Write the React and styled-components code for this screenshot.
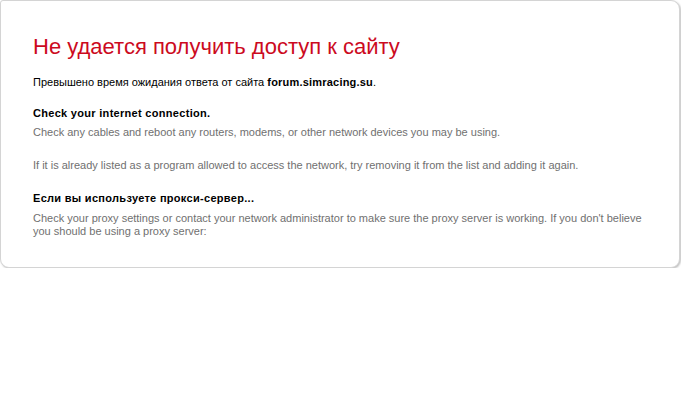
import React from 'react';
import styled, {createGlobalStyle} from 'styled-components';

const GlobalStyle = createGlobalStyle`
  html, body {
    margin: 0;
    padding: 0;
    background: #fff;
  }
  body {
    font-family: Tahoma, "Liberation Sans", "DejaVu Sans", sans-serif;
    font-size: 11px;
    color: #000;
  }
`;

const Card = styled.div`
  box-sizing: border-box;
  width: 680px;
  height: 268px;
  margin: 0;
  padding: 33px 32px 0 32px;
  background: #fff;
  border: 1px solid #d4d4d4;
  border-radius: 3px 9px 9px 9px;
  box-shadow: 1px 1px 2px rgba(0, 0, 0, 0.25);
`;

const Title = styled.h1`
  margin: 0 0 15px;
  font-size: 22px;
  font-weight: normal;
  line-height: 26px;
  color: #cc0a1e;
`;

const Lead = styled.p`
  margin: 0 0 17px;
  line-height: 14px;

  b {
    letter-spacing: 0.2px;
  }
`;

const Heading = styled.h2`
  margin: 0 0 ${props => props.gap || 6}px;
  font-size: 11px;
  font-weight: bold;
  letter-spacing: 0.3px;
  line-height: 14px;
`;

const Note = styled.p`
  margin: 0 0 ${props => props.gap || 0}px;
  line-height: 13px;
  color: #707070;
`;

const App = () => (
  <>
    <GlobalStyle />
    <Card>
      <Title>Не удается получить доступ к сайту</Title>
      <Lead>
        Превышено время ожидания ответа от сайта <b>forum.simracing.su</b>.
      </Lead>
      <Heading>Check your internet connection.</Heading>
      <Note gap={20}>
        Check any cables and reboot any routers, modems, or other network devices you may be using.
      </Note>
      <Note gap={19}>
        If it is already listed as a program allowed to access the network, try removing it from the list and adding it again.
      </Note>
      <Heading gap={7}>Если вы используете прокси-сервер...</Heading>
      <Note>
        Check your proxy settings or contact your network administrator to make sure the proxy server is working. If you don't believe you should be using a proxy server:
      </Note>
    </Card>
  </>
);

export default App;
